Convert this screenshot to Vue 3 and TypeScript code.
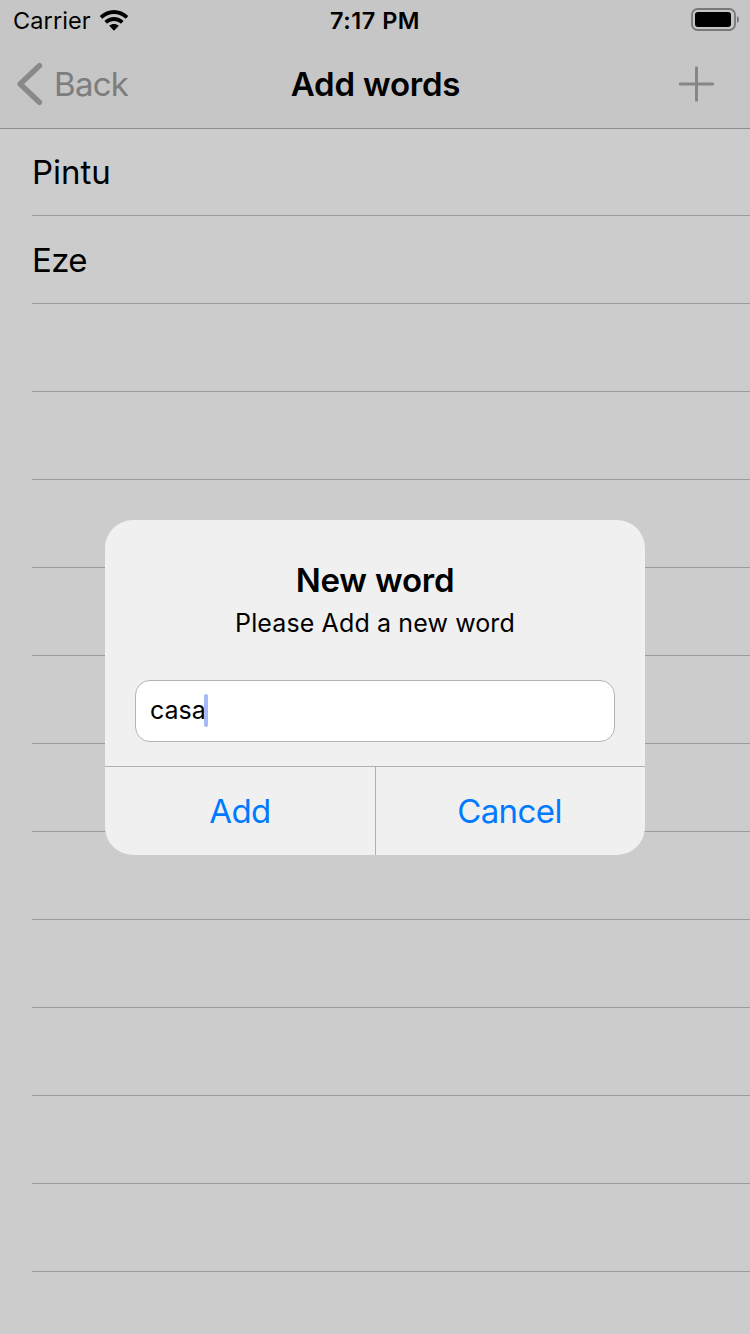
<script setup lang="ts">
import { ref } from 'vue'

const words = ref<string[]>(['Pintu', 'Eze'])
const rowCount = 14
const draft = ref('casa')
</script>

<template>
  <div class="screen">
    <header class="top">
      <div class="status">
        <div class="carrier">
          <span class="carrier-name">Carrier</span>
          <svg class="wifi" width="30" height="22" viewBox="0 0 30 22">
            <path d="M0.7 7.1C8.7-1 21.3-1 29.3 7.1L26.7 9.8C20.2 3.4 9.8 3.4 3.3 9.8Z" />
            <path d="M5.4 11.9C10.8 6.7 19.2 6.7 24.6 11.9L21.9 14.7C18 11 12 11 8.1 14.7Z" />
            <path d="M10.2 16.8C12.9 14.4 17.1 14.4 19.8 16.8L15 21.7Z" />
          </svg>
        </div>
        <span class="time">7:17 PM</span>
        <svg class="battery" width="48" height="23" viewBox="0 0 48 23">
          <rect x="1" y="1" width="43" height="21" rx="5.6" fill="none" stroke="#787878" stroke-width="1.8" />
          <rect x="4" y="4" width="36" height="15" rx="3" fill="#000" />
          <path d="M46 8C47.4 8.8 48 10 48 11.5S47.4 14.2 46 15Z" fill="#787878" />
        </svg>
      </div>
      <nav class="nav">
        <div class="back">
          <svg width="26" height="44" viewBox="0 0 26 44">
            <path d="M22.4 3.7L3.1 22L22.4 40.3" fill="none" stroke="#898989" stroke-width="5.4" stroke-linecap="round" stroke-linejoin="round" />
          </svg>
          <span class="back-label">Back</span>
        </div>
        <h1 class="title">Add words</h1>
        <svg class="plus" width="36" height="36" viewBox="0 0 36 36">
          <path d="M18.5 1.7V34.3M2.3 18H34.7" fill="none" stroke="#868686" stroke-width="3" stroke-linecap="round" />
        </svg>
      </nav>
    </header>

    <ul class="list">
      <li v-for="n in rowCount" :key="n" class="row">
        <span>{{ words[n - 1] ?? '' }}</span>
      </li>
    </ul>

    <section class="dialog" role="dialog">
      <div class="body">
        <h2 class="dialog-title">New word</h2>
        <p class="message">Please Add a new word</p>
        <div class="field"><span class="draft">{{ draft }}</span><i class="caret"></i></div>
      </div>
      <div class="actions">
        <button class="action"><span class="add">Add</span></button>
        <button class="action"><span class="cancel">Cancel</span></button>
      </div>
    </section>
  </div>
</template>

<style>
body {
  margin: 0;
}
</style>

<style scoped>
.screen {
  position: relative;
  width: 750px;
  height: 1334px;
  overflow: hidden;
  background: #ccc;
  color: #000;
  font-family: Inter, "Liberation Sans", sans-serif;
}
.screen * {
  box-sizing: border-box;
}
.top {
  height: 129px;
  background: #c6c6c6;
  border-bottom: 1px solid #8e8e8e;
}
.status {
  height: 40px;
  display: grid;
  grid-template-columns: 1fr auto 1fr;
  align-items: center;
  padding: 0 11px 0 13px;
  line-height: 38px;
  font-size: 23.5px;
}
.carrier {
  display: flex;
  align-items: center;
  gap: 9px;
}
.wifi {
  margin-top: -1px;
}
.carrier-name {
  width: 77px;
  padding-top: 2px;
  letter-spacing: 0.1px;
  white-space: nowrap;
}
.time {
  padding-top: 2px;
  margin-right: 2px;
  font-weight: 600;
  letter-spacing: 0.5px;
}
.battery {
  justify-self: end;
  margin-top: -1px;
}
.nav {
  height: 88px;
  display: grid;
  grid-template-columns: 1fr auto 1fr;
  align-items: center;
  padding: 0 36px 0 17px;
  line-height: 88px;
}
.back {
  display: flex;
  align-items: center;
  gap: 11px;
  color: #7d7d7d;
  font-size: 33px;
}
.back-label {
  letter-spacing: -0.7px;
}
.title {
  margin: 0 0 0 20px;
  font-size: 33px;
  font-weight: 600;
  letter-spacing: -0.2px;
}
.plus {
  justify-self: end;
}
.list {
  margin: 0;
  padding: 0 0 0 32px;
  list-style: none;
}
.row {
  height: 88px;
  line-height: 89px;
  border-bottom: 1px solid #9b9b9b;
  font-size: 33px;
  letter-spacing: -0.3px;
}
.row:first-child {
  height: 87px;
  line-height: 87px;
  letter-spacing: 0;
}
.row:nth-child(2) {
  letter-spacing: -0.7px;
}
.dialog {
  position: absolute;
  left: 105px;
  top: 520px;
  width: 540px;
  height: 335px;
  border-radius: 28px;
  overflow: hidden;
  background: #f0f0f0;
}
.body {
  height: 246px;
  padding: 40px 30px 0;
  text-align: center;
}
.dialog-title {
  margin: 0;
  line-height: 40px;
  font-size: 33px;
  font-weight: 600;
  letter-spacing: -0.2px;
}
.message {
  margin: 7px 0 41px;
  line-height: 32px;
  font-size: 25px;
  letter-spacing: 0.12px;
}
.field {
  height: 62px;
  display: flex;
  align-items: center;
  padding: 0 14px 2px;
  border: 1px solid #b3b3b3;
  border-radius: 15px;
  background: #fff;
  font-size: 25px;
}
.caret {
  width: 4px;
  height: 33px;
  margin-left: -2px;
  border-radius: 2px;
  background: #a6b9f8;
}
.actions {
  display: grid;
  grid-template-columns: 271px 269px;
  height: 89px;
  border-top: 1px solid #b0b0b0;
}
.action {
  margin: 0;
  padding: 0;
  border: 0;
  background: none;
  color: #007aff;
  font: 400 33px/88px Inter, "Liberation Sans", sans-serif;
  letter-spacing: -0.6px;
}
.action:first-child {
  border-right: 1px solid #b0b0b0;
}
.cancel {
  margin-right: 2px;
}
</style>
